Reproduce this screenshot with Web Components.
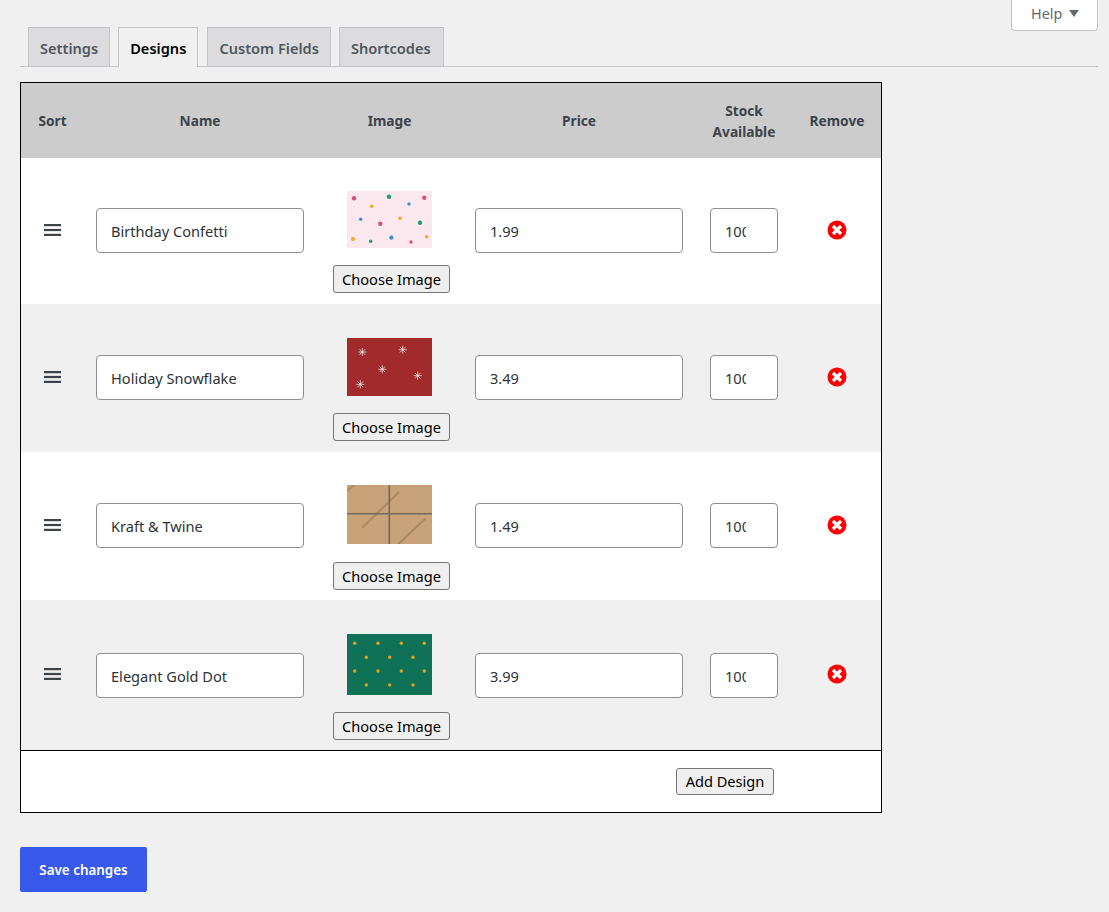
<!DOCTYPE html>
<html lang="en">
<head>
<meta charset="utf-8">
<title>Designs</title>
<style>
    html, body { margin: 0; background: #f0f0f0; }
    body { font-family: "Noto Sans", "Open Sans", sans-serif; color: #3c434a; height: 912px; overflow: hidden; }
</style>
</head>
<body>
<settings-page>
    <help-tab slot="help">Help</help-tab>
    <tab-bar slot="tabs">
        <tab-link>Settings</tab-link>
        <tab-link active>Designs</tab-link>
        <tab-link>Custom Fields</tab-link>
        <tab-link style="padding-right:12px">Shortcodes</tab-link>
    </tab-bar>
    <design-table slot="content">
        <design-row name="Birthday Confetti" price="1.99" pattern="confetti" style="--pad-top:33px;--img-h:57px;--img-gap:17px;--pad-bottom:11px"></design-row>
        <design-row alt name="Holiday Snowflake" price="3.49" pattern="snow" style="--pad-top:34px;--img-h:58px;--img-gap:17px;--pad-bottom:11px"></design-row>
        <design-row name="Kraft &amp; Twine" price="1.49" pattern="kraft" style="--pad-top:33px;--img-h:59px;--img-gap:18px;--pad-bottom:10px"></design-row>
        <design-row alt name="Elegant Gold Dot" price="3.99" pattern="gold" style="--pad-top:34px;--img-h:61px;--img-gap:17px;--pad-bottom:10px;--in-top:1px;--in-bottom:0px"></design-row>
    </design-table>
    <save-button slot="footer">Save changes</save-button>
</settings-page>

<script>
// Patterns for the design thumbnails
const dots = (list, r, fill) => list.map(([x, y]) => `<circle cx="${x}" cy="${y}" r="${r}" fill="${fill}"/>`).join('');
const flake = ([x, y]) => {
    let rays = '';
    for (let a = 0; a < 4; a++) {
        const dx = (Math.cos(a * Math.PI / 4) * 4).toFixed(2);
        const dy = (Math.sin(a * Math.PI / 4) * 4).toFixed(2);
        rays += `<line x1="${x - dx}" y1="${y - dy}" x2="${x + +dx}" y2="${y + +dy}"/>`;
    }
    return rays;
};

const patterns = {
    confetti: { h: 57, svg: `<rect width="85" height="57" fill="#fbe7ee"/>`
        + dots([[7, 7.3], [77.3, 6.7], [33.3, 32.7]], 2.2, '#d94f7e') + dots([[64, 51]], 1.7, '#d94f7e')
        + dots([[42, 5.7], [73, 31.7]], 2.2, '#1f9e6e') + dots([[23.7, 50.3]], 1.7, '#1f9e6e')
        + dots([[24.7, 15.3], [53, 27.3], [79.7, 45.7]], 1.7, '#f5a623') + dots([[6, 48]], 2.1, '#f5a623')
        + dots([[62, 13], [13.7, 28.3]], 1.7, '#3b8fe0') + dots([[44.3, 46.7]], 2.1, '#3b8fe0') },
    snow: { h: 58, svg: `<rect width="85" height="58" fill="#a12b2b"/>`
        + `<g stroke="#fff" stroke-width=".8" stroke-opacity=".85">`
        + [[15.3, 14], [55.7, 11.7], [35.3, 31.3], [70.7, 37.7], [13.3, 46.3]].map(flake).join('') + `</g>` },
    kraft: { h: 59, svg: `<rect width="85" height="59" fill="#c8a278"/>`
        + `<g stroke="#a88a62" stroke-width="2" stroke-linecap="round"><line x1="51.3" y1="7.7" x2="15.7" y2="42.3"/><line x1="78" y1="34" x2="51.3" y2="59"/><line x1="0" y1="5.7" x2="7.3" y2="0"/></g>`
        + `<g stroke="#75695a" stroke-width="1.6"><line x1="42.3" y1="0" x2="42.3" y2="59"/><line x1="0" y1="28.7" x2="85" y2="28.7"/></g>` },
    gold: { h: 61, svg: `<rect width="85" height="61" fill="#0f7155"/>`
        + dots([7.7, 31, 54.3, 77.3].flatMap(x => [[x, 9.3], [x, 37]]), 1.7, '#e6a020')
        + dots([19.3, 42.7, 66].flatMap(x => [[x, 23.3], [x, 51]]), 1.7, '#e6a020') }
};

const buttonCss = `
    button {
        font: 14.6px/1 "Noto Sans", sans-serif;
        color: #000;
        background: #efefef;
        border: 1px solid #767676;
        border-radius: 3px;
        padding: 0;
        height: 28px;
    }
`;

class SettingsPage extends HTMLElement {
    constructor() {
        super();
        this.attachShadow({ mode: 'open' });
        this.shadowRoot.innerHTML = `
            <style>
                :host { display: block; padding: 0 11px 0 20px; }
                .top { display: flex; justify-content: flex-end; height: 27px; }
                .tabs { border-bottom: 1px solid #c3c4c7; height: 39px; padding-left: 8px; }
                .content { margin-top: 15px; }
                .footer { margin-top: 34px; }
            </style>
            <div class="top"><slot name="help"></slot></div>
            <div class="tabs"><slot name="tabs"></slot></div>
            <div class="content"><slot name="content"></slot></div>
            <div class="footer"><slot name="footer"></slot></div>
        `;
    }
}

class HelpTab extends HTMLElement {
    constructor() {
        super();
        this.attachShadow({ mode: 'open' });
        this.shadowRoot.innerHTML = `
            <style>
                :host {
                    display: flex; align-items: center; gap: 7px; box-sizing: border-box;
                    width: 87px; height: 31px; padding: 0 0 4px 19px; margin-bottom: -4px;
                    background: #fff; border: 1px solid #c3c4c7; border-top: 0;
                    border-radius: 0 0 4px 4px; color: #646970; font-size: 14.4px;
                }
                i { width: 0; height: 0; border: 5px solid transparent; border-top: 7px solid #646970; border-bottom: 0; margin-top: 1px; }
            </style>
            <slot></slot><i></i>
        `;
    }
}

class TabBar extends HTMLElement {
    constructor() {
        super();
        this.attachShadow({ mode: 'open' });
        this.shadowRoot.innerHTML = `
            <style>:host { display: flex; gap: 8px; height: 40px; }</style>
            <slot></slot>
        `;
    }
}

class TabLink extends HTMLElement {
    constructor() {
        super();
        this.attachShadow({ mode: 'open' });
        this.shadowRoot.innerHTML = `
            <style>
                :host {
                    display: flex; align-items: center; box-sizing: border-box; padding: 1px 11px 0; height: 39px;
                    background: #dcdcde; border: 1px solid #c3c4c7; border-bottom: 0;
                    font-size: 14.6px; font-weight: 600; color: #50575e;
                }
                :host([active]) { height: 40px; padding-top: 0; margin-right: 1px; background: #f0f0f0; color: #000; }
            </style>
            <slot></slot>
        `;
    }
}

class DesignTable extends HTMLElement {
    constructor() {
        super();
        this.attachShadow({ mode: 'open' });
        this.shadowRoot.innerHTML = `
            <style>
                :host { display: block; box-sizing: border-box; width: 862px; border: 1px solid #000; background: #fff; }
                .head {
                    display: grid; grid-template-columns: 63px 232px 147px 232px 98px 88px;
                    align-items: center; justify-items: center; height: 75px; background: #ccc;
                    font-size: 13.7px; font-weight: 700; color: #3c434a; text-align: center; line-height: 21px;
                }
                .foot {
                    display: flex; justify-content: flex-start; padding: 17px 0 17px 655px;
                    border-top: 1px solid #000; height: 27px;
                }
                ${buttonCss}
                button { width: 98px; height: 27px; }
            </style>
            <div class="head">
                <span>Sort</span><span>Name</span><span>Image</span><span>Price</span><span>Stock<br>Available</span><span>Remove</span>
            </div>
            <slot></slot>
            <div class="foot"><button>Add Design</button></div>
        `;
    }
}

class DesignRow extends HTMLElement {
    constructor() {
        super();
        this.attachShadow({ mode: 'open' });
    }

    connectedCallback() {
        const p = patterns[this.getAttribute('pattern')];
        this.shadowRoot.innerHTML = `
            <style>
                :host {
                    display: grid; grid-template-columns: 63px 232px 147px 232px 98px 88px;
                    align-items: center; justify-items: center; background: #fff;
                }
                :host([alt]) { background: #f0f0f0; }
                ${buttonCss}
                input {
                    box-sizing: border-box; height: 45px; width: 208px; padding: 0 14px;
                    margin: var(--in-top, 0px) 0 var(--in-bottom, 1px);
                    font: 14.6px "Noto Sans", sans-serif; color: #2c3338; background: #fff;
                    border: 1px solid #8c8f94; border-radius: 4px; outline: 0;
                }
                input[type=number] { width: 68px; padding-right: 16px; }
                .image {
                    display: flex; flex-direction: column; align-items: flex-start; width: 117px;
                    padding: var(--pad-top) 0 var(--pad-bottom) 4px;
                }
                .image svg { display: block; width: 85px; height: var(--img-h); margin: 0 0 var(--img-gap) 14px; }
                .image button { width: 117px; }
                .handle, .remove { display: block; margin-bottom: 3px; }
            </style>
            <svg class="handle" width="17" height="12" viewBox="0 0 17 12" fill="#3c434a">
                <rect y="0" width="17" height="2.2"/><rect y="4.9" width="17" height="2.2"/><rect y="9.8" width="17" height="2.2"/>
            </svg>
            <input type="text" value="${this.getAttribute('name').replace('&', '&amp;')}">
            <div class="image">
                <svg viewBox="0 0 85 ${p.h}" preserveAspectRatio="none">${p.svg}</svg>
                <button>Choose Image</button>
            </div>
            <input type="text" value="${this.getAttribute('price')}">
            <input type="number" value="100">
            <svg class="remove" width="20" height="20" viewBox="0 0 20 20">
                <circle cx="10" cy="10" r="9.5" fill="#f00"/>
                <path d="M6 6 14 14M14 6 6 14" stroke="#fff" stroke-width="3.2"/>
            </svg>
        `;
    }
}

class SaveButton extends HTMLElement {
    constructor() {
        super();
        this.attachShadow({ mode: 'open' });
        this.shadowRoot.innerHTML = `
            <style>
                :host {
                    display: inline-flex; align-items: center; justify-content: center; box-sizing: border-box;
                    width: 127px; height: 45px; background: #3858e9; border-radius: 2px;
                    color: #fff; font-size: 13.4px; font-weight: 600;
                }
            </style>
            <slot></slot>
        `;
    }
}

customElements.define('settings-page', SettingsPage);
customElements.define('help-tab', HelpTab);
customElements.define('tab-bar', TabBar);
customElements.define('tab-link', TabLink);
customElements.define('design-table', DesignTable);
customElements.define('design-row', DesignRow);
customElements.define('save-button', SaveButton);
</script>
</body>
</html>
